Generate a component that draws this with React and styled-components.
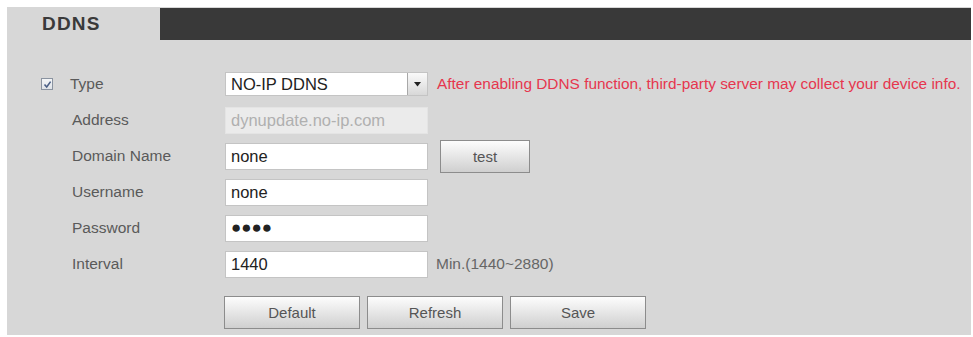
import React from "react";
import styled, { createGlobalStyle } from "styled-components";

const GlobalStyle = createGlobalStyle`
  body {
    margin: 0;
    background: #ffffff;
    font-family: "Liberation Sans", Arial, sans-serif;
  }
`;

const Page = styled.div`
  padding: 7px 2px 2px 7px;
`;

const Panel = styled.div`
  background: #d7d7d7;
  height: 328px;
  display: flex;
  flex-direction: column;
`;

const Header = styled.div`
  display: flex;
  height: 33px;
`;

const Tab = styled.div`
  width: 153px;
  padding-left: 35px;
  box-sizing: border-box;
  display: flex;
  align-items: center;
  font-size: 19px;
  font-weight: 700;
  letter-spacing: 1.2px;
  color: #3a3a3a;
`;

const Bar = styled.div`
  flex: 1;
  margin-top: 1px;
  background: #393939;
`;

const Form = styled.div`
  padding-top: 26px;
  display: flex;
  flex-direction: column;
`;

const Row = styled.div`
  display: flex;
  align-items: center;
  height: 36px;
`;

const LabelCell = styled.div`
  width: 218px;
  box-sizing: border-box;
  padding-left: ${(p) => (p.$check ? "34px" : "65px")};
  display: flex;
  align-items: center;
  font-size: 15.5px;
  color: #5a5a5a;
`;

const Check = styled.span`
  width: 10px;
  height: 10px;
  border: 1px solid #8a93a0;
  background: linear-gradient(#f4f6f8, #dfe3e8);
  margin-right: 17px;
  display: flex;
  align-items: center;
  justify-content: center;
`;

const Field = styled.div`
  width: 203px;
  height: ${(p) => (p.$short ? "24px" : "27px")};
  box-sizing: border-box;
  border: 1px solid ${(p) => (p.$disabled ? "#e4e4e4" : "#c4c4c4")};
  background: ${(p) => (p.$disabled ? "#ebebeb" : "#ffffff")};
  color: ${(p) => (p.$disabled ? "#b0b0b0" : "#222222")};
  font-size: 16.5px;
  padding-left: 5px;
  display: flex;
  align-items: center;
  position: relative;
`;

const Arrow = styled.span`
  position: absolute;
  right: 0;
  top: 0;
  bottom: 0;
  width: 19px;
  border-left: 1px solid #a8a8a8;
  background: linear-gradient(#fafafa, #d8d8d8);
  display: flex;
  align-items: center;
  justify-content: center;
`;

const Note = styled.span`
  margin-left: ${(p) => (p.$red ? "9px" : "8px")};
  font-size: ${(p) => (p.$red ? "15.4px" : "15.5px")};
  color: ${(p) => (p.$red ? "#e6364e" : "#666666")};
  white-space: nowrap;
`;

const Button = styled.button`
  width: ${(p) => (p.$small ? "90px" : "136px")};
  height: 33px;
  border: 1px solid #8c8c8c;
  background: linear-gradient(#fdfdfd, #e6e6e6 50%, #cfcfcf);
  color: #555555;
  font-family: "Liberation Sans", Arial, sans-serif;
  font-size: 15px;
  padding: 0;
  margin-left: ${(p) => (p.$small ? "12px" : "0")};
`;

const ButtonRow = styled.div`
  display: flex;
  gap: 7px;
  padding-left: 217px;
  margin-top: 14px;
`;

const Dots = styled.span`
  font-size: 17px;
`;

const rows = [
  { label: "Address", value: "dynupdate.no-ip.com", disabled: true },
  { label: "Domain Name", value: "none", test: true },
  { label: "Username", value: "none" },
  { label: "Password", value: "●●●●", dots: true },
  { label: "Interval", value: "1440", note: "Min.(1440~2880)" },
];

export default function App() {
  return (
    <Page>
      <GlobalStyle />
      <Panel>
        <Header>
          <Tab>DDNS</Tab>
          <Bar />
        </Header>
        <Form>
          <Row>
            <LabelCell $check>
              <Check>
                <svg width="9" height="9" viewBox="0 0 9 9">
                  <path d="M1.5 4.5 L3.7 7 L7.6 1.6" fill="none" stroke="#4a5f86" strokeWidth="1.6" />
                </svg>
              </Check>
              Type
            </LabelCell>
            <Field $short>
              NO-IP DDNS
              <Arrow>
                <svg width="7" height="5" viewBox="0 0 7 5">
                  <path d="M0 0 H7 L3.5 4.5 Z" fill="#222" />
                </svg>
              </Arrow>
            </Field>
            <Note $red>
              After enabling DDNS function, third-party server may collect your device info.
            </Note>
          </Row>
          {rows.map((r) => (
            <Row key={r.label}>
              <LabelCell>{r.label}</LabelCell>
              <Field $disabled={r.disabled}>
                {r.dots ? <Dots>{r.value}</Dots> : r.value}
              </Field>
              {r.test && <Button $small>test</Button>}
              {r.note && <Note>{r.note}</Note>}
            </Row>
          ))}
          <ButtonRow>
            <Button>Default</Button>
            <Button>Refresh</Button>
            <Button>Save</Button>
          </ButtonRow>
        </Form>
      </Panel>
    </Page>
  );
}
